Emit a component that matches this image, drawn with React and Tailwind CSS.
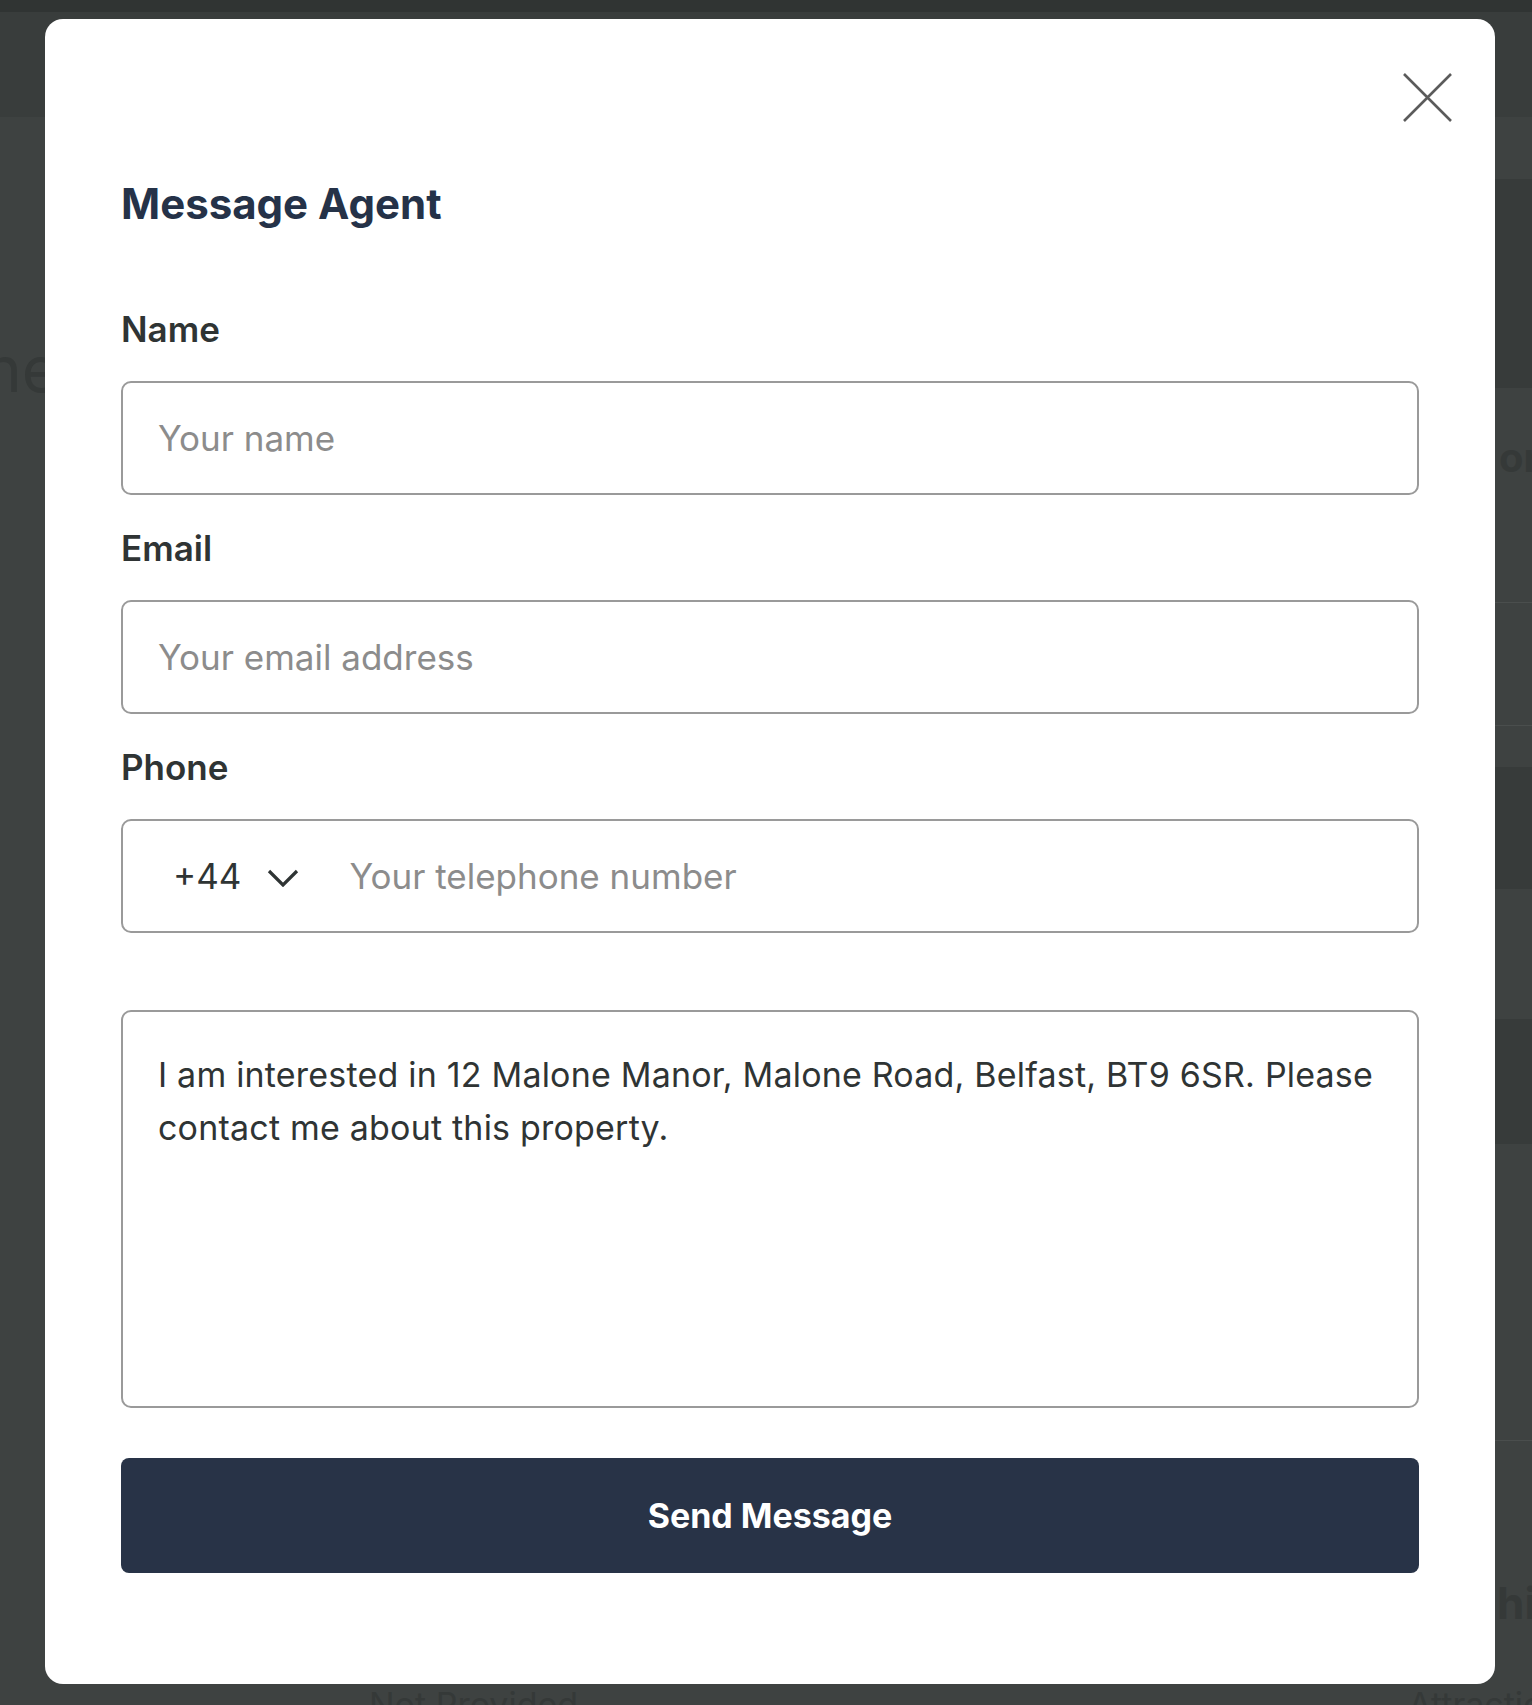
import { useState } from 'react';

function CloseIcon() {
  return (
    <svg width="49" height="49" viewBox="0 0 49 49" fill="none">
      <path d="M1 1L48 48M48 1L1 48" stroke="#5b5b5b" strokeWidth="2.6" />
    </svg>
  );
}

function Chevron() {
  return (
    <svg width="32" height="18" viewBox="0 0 32 18" fill="none">
      <path d="M2 2L16 16L30 2" stroke="#2f3434" strokeWidth="3.2" />
    </svg>
  );
}

function BackdropPage() {
  // faint page behind the overlay
  return (
    <div className="flex flex-col">
      <div className="h-[12px] bg-[#303433]" />
      <div className="h-[105px] bg-[#393d3c]" />
      <div className="flex h-[1571px]">
        <div className="w-[45px] overflow-hidden">
          <div className="mt-[220px] -ml-[16px] text-[64px] leading-none text-[#353938]">ne</div>
        </div>
        <div className="flex-1" />
        <div className="w-[37px] flex flex-col">
          <div className="h-[62px]" />
          <div className="h-[209px] bg-[#373b3a]" />
          <div className="h-[215px] border-b border-[#4a4e4d] pt-[50px] pl-[4px] text-[40px] font-bold leading-none text-[#353938]">or</div>
          <div className="h-[123px] border-b border-[#4a4e4d]" />
          <div className="h-[41px]" />
          <div className="h-[122px] bg-[#373b3a]" />
          <div className="h-[130px]" />
          <div className="h-[125px] bg-[#373b3a]" />
          <div className="h-[297px] border-b border-[#4a4e4d]" />
          <div className="pt-[140px] pl-[2px] text-[44px] font-bold leading-none text-[#353938]">hi</div>
        </div>
      </div>
      <div className="flex text-[34px] leading-none text-[#353938] whitespace-nowrap">
        <span className="ml-[369px]">Not Provided</span>
        <span className="ml-[830px]">Attractions</span>
      </div>
    </div>
  );
}

function Label({ children, htmlFor }) {
  return (
    <label htmlFor={htmlFor} className="block text-[35px] leading-none font-semibold text-[#2f3434] mb-[34px]">
      {children}
    </label>
  );
}

const inputCls =
  'block w-full h-[114px] rounded-[10px] border-2 border-[#9a9a9a] bg-white px-[35px] text-[35px] text-[#2f3434] placeholder:text-[#8c8c8c] outline-none';

export default function App() {
  const [message, setMessage] = useState(
    'I am interested in 12 Malone Manor, Malone Road, Belfast, BT9 6SR. Please contact me about this property.'
  );

  return (
    <div className="relative h-[1705px] overflow-hidden bg-[#3e4241] font-['Inter',sans-serif]">
      <BackdropPage />

      <div className="absolute left-[45px] top-[19px] w-[1450px] h-[1665px] rounded-[18px] bg-white px-[76px] pt-[164px]">
        <button className="absolute right-[43px] top-[54px]" aria-label="Close">
          <CloseIcon />
        </button>

        <h2 className="text-[42px] leading-none font-bold text-[#253248]">Message Agent</h2>

        <form className="mt-[87px]" onSubmit={(e) => e.preventDefault()}>
          <Label htmlFor="name">Name</Label>
          <input id="name" type="text" placeholder="Your name" className={inputCls} />

          <div className="mt-[36px]">
            <Label htmlFor="email">Email</Label>
            <input id="email" type="email" placeholder="Your email address" className={inputCls} />
          </div>

          <div className="mt-[36px]">
            <Label htmlFor="phone">Phone</Label>
            <div className="flex items-center h-[114px] rounded-[10px] border-2 border-[#9a9a9a] bg-white">
              <button type="button" className="flex items-center ml-[50px] text-[35px] text-[#2f3434]">
                <span>+44</span>
                <span className="ml-[26px] mt-[4px]">
                  <Chevron />
                </span>
              </button>
              <input
                id="phone"
                type="tel"
                placeholder="Your telephone number"
                className="flex-1 ml-[50px] h-full bg-transparent text-[35px] text-[#2f3434] placeholder:text-[#8c8c8c] outline-none"
              />
            </div>
          </div>

          <textarea
            value={message}
            onChange={(e) => setMessage(e.target.value)}
            className="mt-[77px] block w-full h-[398px] resize-none rounded-[10px] border-2 border-[#9a9a9a] bg-white px-[35px] pt-[36px] text-[34px] leading-[53px] tracking-[0.2px] text-[#2f3434] outline-none"
          />

          <button
            type="submit"
            className="mt-[50px] w-full h-[115px] rounded-[8px] bg-[#283347] text-[34px] font-bold text-white"
          >
            Send Message
          </button>
        </form>
      </div>
    </div>
  );
}
